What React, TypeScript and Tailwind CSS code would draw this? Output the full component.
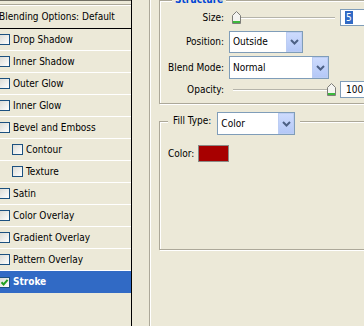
import React from "react";

const Check = ({ checked = false, className = "" }: { checked?: boolean; className?: string }) => (
  <span
    className={`shrink-0 flex items-center justify-center w-[11px] h-[11px] border border-[#1c5180] bg-gradient-to-br from-[#dcdcd7] to-white ${className}`}
  >
    {checked && (
      <svg width="9" height="9" viewBox="0 0 9 9">
        <path d="M1.5 4.2 L3.6 6.4 L7.6 1.8" fill="none" stroke="#21a121" strokeWidth="2" />
      </svg>
    )}
  </span>
);

const Chevron = () => (
  <svg width="9" height="6" viewBox="0 0 9 6">
    <path d="M1 1 L4.5 4.5 L8 1" fill="none" stroke="#4d6185" strokeWidth="2" />
  </svg>
);

const Select = ({ value, className = "" }: { value: string; className?: string }) => (
  <div className={`flex border border-[#7f9db9] bg-white ${className}`}>
    <div className="flex-1 flex items-center pl-[3px] text-black">{value}</div>
    <div className="w-[16px] flex items-center justify-center bg-gradient-to-b from-[#cddbfd] to-[#b4c8f7] border border-[#bccdf3]">
      <Chevron />
    </div>
  </div>
);

const Thumb = () => (
  <svg width="9" height="13" viewBox="0 0 9 13">
    <path d="M0.5 4.5 L4.5 0.5 L8.5 4.5 L8.5 12.5 L0.5 12.5 Z" fill="#f4f4f0" stroke="#7d7d78" strokeWidth="1" />
    <rect x="1" y="10" width="7" height="2" fill="#3cb93c" />
  </svg>
);

const Slider = ({ end = false }: { end?: boolean }) => (
  <div className="relative w-[105px] h-[13px] ml-[8px] shrink-0">
    <div className="absolute left-[1px] right-[2px] top-[6px] h-[2px] border-t border-t-[#b5b4aa] bg-white" />
    <div className={`absolute top-0 ${end ? "right-[1px]" : "left-0"}`}>
      <Thumb />
    </div>
  </div>
);

const items: [string, boolean][] = [
  ["Drop Shadow", false],
  ["Inner Shadow", false],
  ["Outer Glow", false],
  ["Inner Glow", false],
  ["Bevel and Emboss", false],
  ["Contour", true],
  ["Texture", true],
  ["Satin", false],
  ["Color Overlay", false],
  ["Gradient Overlay", false],
  ["Pattern Overlay", false],
];

export default function App() {
  return (
    <div className="w-[364px] h-[326px] overflow-hidden bg-[#ece9d8] flex text-[10px] leading-[12px] text-black font-['DejaVu_Sans_Condensed','Liberation_Sans',sans-serif]">
      {/* Left list */}
      <div className="w-[132px] shrink-0 h-full border-r border-black flex flex-col">
        <div className="h-[5px] border-t border-t-[#716f64] border-b border-b-[#aca899]" />
        <div className="h-[1px] bg-white" />
        <div className="h-[23px] border-b border-black flex items-center">
          <span className="ml-[-1px] whitespace-nowrap">Blending Options: Default</span>
        </div>
        {items.map(([label, sub]) => (
          <div key={label} className="h-[22px] border-b border-white flex items-center gap-[3px]">
            <Check className={sub ? "ml-[12px]" : "ml-[-1px]"} />
            <span className="whitespace-nowrap">{label}</span>
          </div>
        ))}
        <div className="h-[22px] bg-[#316ac5] flex items-center gap-[3px]">
          <Check checked className="ml-[-1px]" />
          <span className="font-bold text-white">Stroke</span>
        </div>
      </div>

      <div className="w-[17px] shrink-0" />

      {/* Right panel */}
      <div className="w-[240px] shrink-0 h-full border-l border-[#aca899] shadow-[inset_1px_0_0_#fff] pl-[9px] flex flex-col">
        {/* Structure group */}
        <div className="h-[104px] shrink-0 border border-[#aca899] shadow-[1px_1px_0_#fff,inset_1px_1px_0_#fff] flex flex-col">
          <div className="-mt-[7px] h-[12px] flex">
            <span className="ml-[12px] px-[3px] bg-[#ece9d8] font-bold text-[#0046d5]">Structure</span>
          </div>
          <div className="mt-[3px] h-[17px] flex items-center">
            <span className="w-[64px] text-right">Size:</span>
            <Slider />
            <div className="ml-[3px] w-[30px] h-[17px] shrink-0 border border-[#7f9db9] bg-white flex items-center pl-[4px]">
              <span className="h-[13px] leading-[13px] bg-[#316ac5] text-white px-[1px]">5</span>
            </div>
          </div>
          <div className="mt-[5px] h-[22px] flex items-center">
            <span className="w-[64px] text-right">Position:</span>
            <Select value="Outside" className="ml-[5px] w-[74px] h-[22px]" />
          </div>
          <div className="mt-[3px] h-[23px] flex items-center">
            <span className="w-[64px] text-right">Blend Mode:</span>
            <Select value="Normal" className="ml-[5px] w-[100px] h-[23px]" />
          </div>
          <div className="mt-[2px] h-[17px] flex items-center">
            <span className="w-[64px] text-right">Opacity:</span>
            <Slider end />
            <div className="ml-[3px] w-[30px] h-[17px] shrink-0 border border-[#7f9db9] bg-white flex items-center pl-[5px]">
              100
            </div>
          </div>
        </div>

        {/* Fill Type group */}
        <div className="mt-[17px] h-[129px] shrink-0 border border-[#aca899] shadow-[1px_1px_0_#fff,inset_1px_1px_0_#fff] flex flex-col">
          <div className="-mt-[10px] h-[23px] flex">
            <div className="ml-[8px] px-[5px] bg-[#ece9d8] flex items-start gap-[6px]">
              <span className="mt-[3px] whitespace-nowrap">Fill Type:</span>
              <Select value="Color" className="w-[78px] h-[23px]" />
            </div>
          </div>
          <div className="mt-[10px] flex items-center">
            <span className="ml-[8px]">Color:</span>
            <div className="ml-[4px] w-[31px] h-[17px] border border-[#8a8a86] bg-[#a70000]" />
          </div>
        </div>
      </div>
    </div>
  );
}
